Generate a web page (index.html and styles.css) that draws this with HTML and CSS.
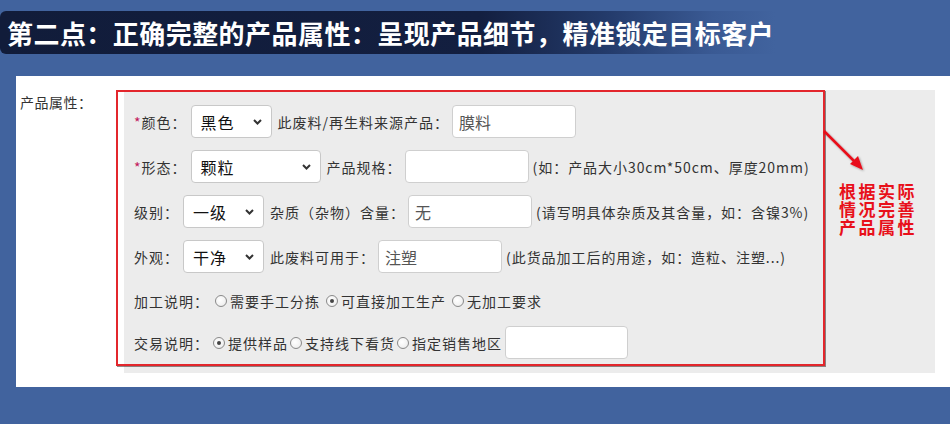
FILE: index.html
```html
<!DOCTYPE html>
<html lang="zh-CN">
<head>
<meta charset="utf-8">
<title>产品属性</title>
<link rel="stylesheet" href="styles.css">
</head>
<body>
<div class="page">
  <div class="title-bar">
    <h1 class="title">第二点：正确完整的产品属性：呈现产品细节，精准锁定目标客户</h1>
  </div>
  <div class="card">
    <div class="attr-label">产品属性：</div>
    <div class="attr-panel">
      <div class="frame"></div>

      <div class="row r1">
        <span class="lbl"><em class="req">*</em>颜色：</span>
        <div class="select w81"><span>黑色</span><svg class="chev" width="9" height="6" viewBox="0 0 9 6"><path d="M1 1 L4.5 4.5 L8 1" fill="none" stroke="#333" stroke-width="2"/></svg></div>
        <span class="txt">此废料/再生料来源产品：</span>
        <input class="field" type="text" value="膜料">
      </div>

      <div class="row r2">
        <span class="lbl"><em class="req">*</em>形态：</span>
        <div class="select w130"><span>颗粒</span><svg class="chev" width="9" height="6" viewBox="0 0 9 6"><path d="M1 1 L4.5 4.5 L8 1" fill="none" stroke="#333" stroke-width="2"/></svg></div>
        <span class="txt">产品规格：</span>
        <input class="field" type="text" value="">
        <span class="hint">(如：产品大小30cm*50cm、厚度20mm)</span>
      </div>

      <div class="row r3">
        <span class="lbl">级别：</span>
        <div class="select w81"><span>一级</span><svg class="chev" width="9" height="6" viewBox="0 0 9 6"><path d="M1 1 L4.5 4.5 L8 1" fill="none" stroke="#333" stroke-width="2"/></svg></div>
        <span class="txt">杂质（杂物）含量：</span>
        <input class="field" type="text" value="无">
        <span class="hint">(请写明具体杂质及其含量，如：含镍3%)</span>
      </div>

      <div class="row r4">
        <span class="lbl">外观：</span>
        <div class="select w81"><span>干净</span><svg class="chev" width="9" height="6" viewBox="0 0 9 6"><path d="M1 1 L4.5 4.5 L8 1" fill="none" stroke="#333" stroke-width="2"/></svg></div>
        <span class="txt">此废料可用于：</span>
        <input class="field" type="text" value="注塑">
        <span class="hint">(此货品加工后的用途，如：造粒、注塑...)</span>
      </div>

      <div class="row r5">
        <span class="lbl">加工说明：</span>
        <span class="opt"><i class="radio"></i>需要手工分拣</span>
        <span class="opt"><i class="radio on"></i>可直接加工生产</span>
        <span class="opt"><i class="radio"></i>无加工要求</span>
      </div>

      <div class="row r6">
        <span class="lbl">交易说明：</span>
        <span class="opt tight"><i class="radio on"></i>提供样品</span>
        <span class="opt tight"><i class="radio"></i>支持线下看货</span>
        <span class="opt tight"><i class="radio"></i>指定销售地区</span>
        <input class="field f6" type="text" value="">
      </div>

      <div class="note">
        <svg class="arrow" width="46" height="46" viewBox="0 0 46 46">
          <g filter="url(#sh)">
            <line x1="2" y1="3" x2="36" y2="37" stroke="#e8101a" stroke-width="2.5"/>
            <path d="M41 42 L28 36 L36 28 Z" fill="#e8101a"/>
          </g>
          <defs>
            <filter id="sh" x="-20%" y="-20%" width="150%" height="150%">
              <feDropShadow dx="1" dy="1" stdDeviation="1" flood-color="#000" flood-opacity="0.35"/>
            </filter>
          </defs>
        </svg>
        <div class="note-text">
          <div class="note-line">根据实际</div>
          <div class="note-line">情况完善</div>
          <div class="note-line">产品属性</div>
        </div>
      </div>
    </div>
  </div>
</div>
</body>
</html>
```

FILE: styles.css
```css
* { box-sizing: border-box; }

html, body {
  margin: 0;
  padding: 0;
}

body {
  background: #41639e;
  font-family: "Noto Sans CJK SC", "Noto Sans", sans-serif;
  width: 950px;
  height: 424px;
  overflow: hidden;
}

.page {
  padding-top: 11px;
}

.title-bar {
  width: 775px;
  height: 43px;
  border-radius: 6px 0 0 6px;
  background: linear-gradient(to right, #111c3a 0%, #131f40 62%, #233a6a 78%, #3a5a94 92%, rgba(65, 99, 158, 0) 100%);
  display: flex;
  align-items: center;
  padding-left: 7px;
}

.title {
  margin: 0;
  color: #fff;
  font-size: 26px;
  font-weight: 700;
  letter-spacing: 0.45px;
  line-height: 1;
  white-space: nowrap;
}

.card {
  margin-top: 22px;
  margin-left: 16px;
  height: 311px;
  background: #fff;
  display: flex;
  padding: 14px 15px 14px 4px;
}

.attr-label {
  width: 104px;
  flex: none;
  font-size: 14px;
  color: #333;
  padding-top: 2px;
  line-height: 20px;
  letter-spacing: 0.5px;
}

.attr-panel {
  position: relative;
  flex: 1;
  background: #ececec;
  padding: 15px 0 0 10px;
  font-size: 14px;
  color: #333;
  letter-spacing: 1px;
}

.frame {
  position: absolute;
  left: -8px;
  top: 0;
  width: 709px;
  height: 276px;
  border: 2px solid #e3262c;
  box-shadow: 1px 1px 0 rgba(60, 40, 40, 0.55);
  pointer-events: none;
}

.row {
  display: flex;
  align-items: center;
  height: 33px;
  white-space: nowrap;
}

.r2, .r3, .r4 { margin-top: 12px; }
.r5 { margin-top: 11px; }
.r6 { margin-top: 9px; }

.lbl { margin-right: 4px; }

.req {
  font-style: normal;
  color: #c2185b;
}

.select {
  height: 33px;
  background: #fff;
  border: 1px solid #c8c8c8;
  border-radius: 4px;
  display: flex;
  align-items: center;
  justify-content: space-between;
  padding: 0 9px 0 9px;
  font-size: 16px;
  color: #111;
  margin-right: 6px;
}

.w81 { width: 81px; }
.w130 { width: 130px; }

.chev { flex: none; }

.txt { margin-right: 3px; }

.field {
  width: 124px;
  height: 33px;
  border: 1px solid #cfcfcf;
  border-radius: 4px;
  background: #fff;
  font-family: "Noto Sans CJK SC", "Noto Sans", sans-serif;
  font-size: 16px;
  color: #555;
  padding: 0 6px;
  margin: 0 4px 0 0;
  outline: none;
}

.hint { color: #333; letter-spacing: 0.95px; }

.opt {
  display: inline-flex;
  align-items: center;
  margin-right: 4px;
}

.opt.tight { margin-right: 2px; }

.radio {
  display: inline-block;
  width: 12px;
  height: 12px;
  border-radius: 50%;
  border: 1px solid #8a8a8a;
  background: radial-gradient(circle at 40% 40%, #fff 0%, #f2f2f2 60%, #dcdcdc 100%);
  margin-right: 3px;
  position: relative;
}

.opt:not(.tight) .radio { margin-left: 2px; }

.radio.on::after {
  content: "";
  position: absolute;
  left: 3px;
  top: 3px;
  width: 4px;
  height: 4px;
  border-radius: 50%;
  background: #444;
}

.f6 { margin-left: 1px; width: 123px; }

.note {
  position: absolute;
  left: 698px;
  top: 38px;
}

.arrow { display: block; }

.note-text {
  margin: 8px 0 0 17px;
  color: #e8101a;
  font-size: 17px;
  font-weight: 700;
  letter-spacing: 2.5px;
}

.note-line {
  height: 18px;
  line-height: 18px;
  overflow: visible;
}
```
